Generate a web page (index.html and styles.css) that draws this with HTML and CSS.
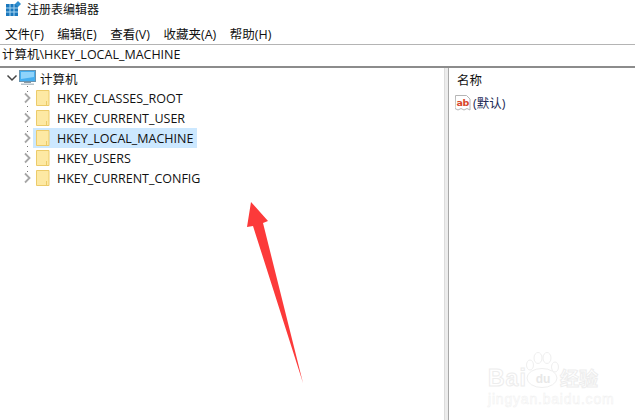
FILE: index.html
```html
<!DOCTYPE html>
<html lang="zh">
<head>
<meta charset="utf-8">
<title>注册表编辑器</title>
<link rel="stylesheet" href="styles.css">
</head>
<body>
<div class="app">
  <header class="titlebar">
    <svg class="appicon" width="15" height="15" viewBox="0 0 15 15">
      <rect x="0" y="3" width="12" height="12" fill="#1b78bd"/>
      <path d="M0 7h12M0 11h12M4 3v12M8 3v12" stroke="#a9d6f2" stroke-width="1"/>
      <path d="M12 0l3 3-3 3-3-3z" fill="#2f8fd0"/>
    </svg>
    <span class="title">注册表编辑器</span>
  </header>
  <nav class="menu">
    <span>文件(F)</span><span>编辑(E)</span><span>查看(V)</span><span>收藏夹(A)</span><span>帮助(H)</span>
  </nav>
  <div class="address">计算机\HKEY_LOCAL_MACHINE</div>
  <main class="panes">
    <section class="tree">
      <div class="row root">
        <svg class="chev" width="12" height="12" viewBox="0 0 12 12"><path d="M1.500 3.500L6 8l4.500-4.500" fill="none" stroke="#444" stroke-width="1.500"/></svg>
        <svg class="pc" width="17" height="16" viewBox="0 0 17 16">
          <rect x="0.500" y="0.500" width="16" height="11" fill="#45aef0" stroke="#6a93ad"/>
          <path d="M2 2h13v5L2 9z" fill="#8fd3fb"/>
          <rect x="5" y="12" width="7" height="1" fill="#8a9aa5"/>
          <rect x="2" y="13.500" width="13" height="1.500" fill="#b6c2ca"/>
        </svg>
        <span>计算机</span>
      </div>
      <div class="row key">
        <svg class="exp" width="9" height="12" viewBox="0 0 9 12"><path d="M1 1.500L5.500 6 1 10.500" fill="none" stroke="#a6a6a6" stroke-width="1.800"/></svg>
        <span class="keybody"><svg class="folder" width="14" height="16" viewBox="0 0 14 16"><path d="M.5.500h12.500v15H.5z" fill="#fde9a4" stroke="#eccb6a"/><path d="M10.500 11v4.500" stroke="#eccb6a"/></svg><span>HKEY_CLASSES_ROOT</span></span>
      </div>
      <div class="row key">
        <svg class="exp" width="9" height="12" viewBox="0 0 9 12"><path d="M1 1.500L5.500 6 1 10.500" fill="none" stroke="#a6a6a6" stroke-width="1.800"/></svg>
        <span class="keybody"><svg class="folder" width="14" height="16" viewBox="0 0 14 16"><path d="M.5.500h12.500v15H.5z" fill="#fde9a4" stroke="#eccb6a"/><path d="M10.500 11v4.500" stroke="#eccb6a"/></svg><span>HKEY_CURRENT_USER</span></span>
      </div>
      <div class="row key">
        <svg class="exp" width="9" height="12" viewBox="0 0 9 12"><path d="M1 1.500L5.500 6 1 10.500" fill="none" stroke="#a6a6a6" stroke-width="1.800"/></svg>
        <span class="keybody selected"><svg class="folder" width="14" height="16" viewBox="0 0 14 16"><path d="M.5.500h12.500v15H.5z" fill="#fde9a4" stroke="#eccb6a"/><path d="M10.500 11v4.500" stroke="#eccb6a"/></svg><span>HKEY_LOCAL_MACHINE</span></span>
      </div>
      <div class="row key">
        <svg class="exp" width="9" height="12" viewBox="0 0 9 12"><path d="M1 1.500L5.500 6 1 10.500" fill="none" stroke="#a6a6a6" stroke-width="1.800"/></svg>
        <span class="keybody"><svg class="folder" width="14" height="16" viewBox="0 0 14 16"><path d="M.5.500h12.500v15H.5z" fill="#fde9a4" stroke="#eccb6a"/><path d="M10.500 11v4.500" stroke="#eccb6a"/></svg><span>HKEY_USERS</span></span>
      </div>
      <div class="row key">
        <svg class="exp" width="9" height="12" viewBox="0 0 9 12"><path d="M1 1.500L5.500 6 1 10.500" fill="none" stroke="#a6a6a6" stroke-width="1.800"/></svg>
        <span class="keybody"><svg class="folder" width="14" height="16" viewBox="0 0 14 16"><path d="M.5.500h12.500v15H.5z" fill="#fde9a4" stroke="#eccb6a"/><path d="M10.500 11v4.500" stroke="#eccb6a"/></svg><span>HKEY_CURRENT_CONFIG</span></span>
      </div>
    </section>
    <div class="splitter"></div>
    <section class="values">
      <div class="colhead">名称</div>
      <div class="value">
        <svg class="abicon" width="16" height="16" viewBox="0 0 16 16">
          <path d="M.5.500h11l3.500 3.500v11l-3-1.500-3 1.500-3-1.500-3 1.500-3-1.500z" fill="#fff" stroke="#b5b5b5"/>
          <text x="1.500" y="10.500" class="abtext">ab</text>
        </svg>
        <span>(默认)</span>
      </div>
    </section>
  </main>
  <svg class="arrow" width="70" height="195" viewBox="0 0 70 195">
    <path d="M11 11L28 30 23 32 63 192 13 35 7 36z" fill="#fc3a3a"/>
  </svg>
  <div class="watermark">
    <svg class="paw" width="38" height="38" viewBox="0 0 38 38">
      <g fill="#fff" stroke="#efefef" stroke-width="1">
        <ellipse cx="6" cy="13" rx="3.500" ry="5"/>
        <ellipse cx="14" cy="6" rx="4" ry="5.500"/>
        <ellipse cx="23" cy="6" rx="4" ry="5.500"/>
        <ellipse cx="31" cy="15" rx="3.500" ry="5"/>
        <ellipse cx="18" cy="26" rx="15" ry="9.500"/>
      </g>
    </svg>
    <div class="wmline"><span class="wmbai">Bai</span><span class="wmdu">du</span><span class="wmjy">经验</span></div>
    <div class="wmurl">jingyan.baidu.com</div>
  </div>
</div>
</body>
</html>
```
FILE: styles.css
```css
* { box-sizing: border-box; }
html, body { margin: 0; padding: 0; background: #fff; }
body { width: 635px; height: 420px; overflow: hidden; font-family: "Open Sans", "Noto Sans CJK SC", sans-serif; font-size: 12.5px; color: #111; }
.app { position: relative; width: 635px; height: 420px; display: flex; flex-direction: column; }
.titlebar { height: 22px; display: flex; align-items: flex-start; padding: 1px 0 0 6px; gap: 6px; flex: none; }
.title { font-family: "Noto Sans CJK SC", sans-serif; font-size: 12px; line-height: 16px; }
.menu { height: 22px; display: flex; align-items: center; gap: 13.500px; padding-left: 5px; flex: none; }
.address { height: 24px; flex: none; border-top: 1px solid #b4b4b4; border-bottom: 2px solid #8c8c8c; padding-left: 2px; line-height: 20px; }
.panes { flex: 1; display: flex; min-height: 0; }
.tree { width: 444px; flex: none; }
.row { height: 20px; display: flex; align-items: center; }
.root { padding-left: 6px; gap: 1px; }
.root span { margin-left: 3px; }
.chev { flex: none; }
.pc { flex: none; }
.key { position: relative; padding-left: 24px; }
.key::before { content: ""; position: absolute; left: 27px; top: -2px; width: 1px; height: 4px; border-top: 1px solid #777; border-bottom: 1px solid #777; }
.exp { flex: none; }
.keybody { height: 20px; flex: none; display: inline-flex; align-items: center; gap: 7px; padding: 0 4px 0 3px; }
.selected { background: #cce8ff; }
.folder { flex: none; }
.splitter { width: 5px; flex: none; background: #ececec; border-right: 1px solid #a8a8a8; border-left: 1px solid #dcdcdc; }
.values { flex: 1; padding: 4px 0 0 8px; }
.colhead { height: 20px; line-height: 18px; }
.value { display: flex; align-items: center; gap: 2px; height: 21px; margin-left: -2px; color: #1d2a55; }
.abicon { flex: none; }
.abtext { font: bold 9.500px "DejaVu Sans", sans-serif; fill: #d8462a; letter-spacing: -0.500px; }
.arrow { position: absolute; left: 240px; top: 191px; }
.watermark { position: absolute; left: 488px; top: 352px; width: 112px; height: 54px; color: #fff; }
.paw { position: absolute; left: 36px; top: 0; }
.wmline { position: absolute; left: 0; top: 14px; display: flex; align-items: center; white-space: nowrap; }
.wmbai { width: 40px; font: bold 23px/24px "Liberation Sans", sans-serif; -webkit-text-stroke: 1px #ededed; color: #fff; letter-spacing: 1px; }
.wmdu { font: bold 12px/16px "Liberation Sans", sans-serif; color: #e8e8e8; width: 30px; height: 18px; text-align: center; margin-top: 4px; }
.wmjy { margin-left: 2px; width: 38px; font: bold 19px/22px "Noto Sans CJK SC", sans-serif; -webkit-text-stroke: 1px #ededed; color: #fff; }
.wmurl { position: absolute; left: 0; top: 39px; font: 14px/16px "Liberation Sans", sans-serif; letter-spacing: 0.800px; -webkit-text-stroke: 0.500px #f0f0f0; color: #fff; white-space: nowrap; }
```
